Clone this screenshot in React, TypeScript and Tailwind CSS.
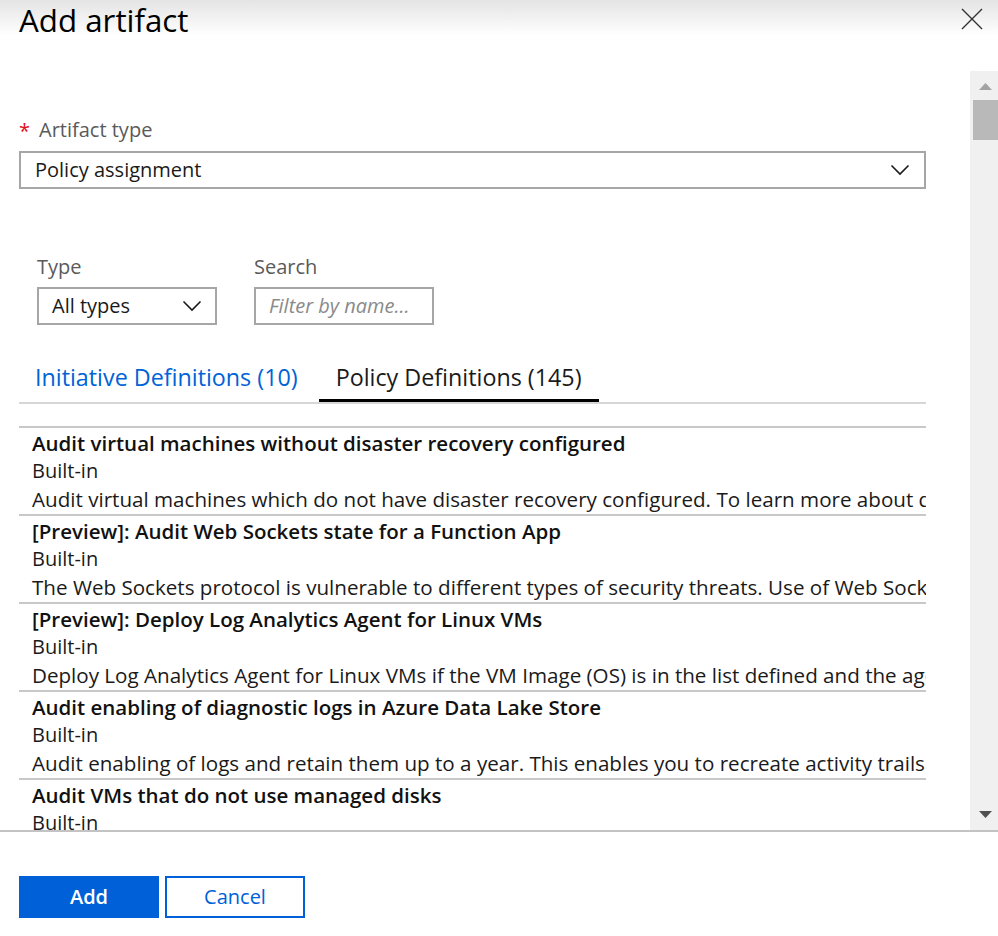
import React from "react";

const rows = [
  {
    title: "Audit virtual machines without disaster recovery configured",
    desc: "Audit virtual machines which do not have disaster recovery configured. To learn more about disaster recovery, visit the documentation.",
  },
  {
    title: "[Preview]: Audit Web Sockets state for a Function App",
    desc: "The Web Sockets protocol is vulnerable to different types of security threats. Use of Web Sockets within a Function app must be carefully analyzed.",
  },
  {
    title: "[Preview]: Deploy Log Analytics Agent for Linux VMs",
    desc: "Deploy Log Analytics Agent for Linux VMs if the VM Image (OS) is in the list defined and the agent is not installed.",
  },
  {
    title: "Audit enabling of diagnostic logs in Azure Data Lake Store",
    desc: "Audit enabling of logs and retain them up to a year. This enables you to recreate activity trails for investigation purposes.",
  },
  {
    title: "Audit VMs that do not use managed disks",
    desc: "This policy audits VMs that do not use managed disks.",
  },
];

function Chevron() {
  return (
    <svg width="20" height="12" viewBox="0 0 20 12" fill="none">
      <path d="M1.5 1.5 L10 10 L18.5 1.5" stroke="#1a1a1a" strokeWidth="1.6" />
    </svg>
  );
}

export default function App() {
  return (
    <div
      className="w-[998px] h-[936px] bg-white flex flex-col overflow-hidden text-[#1a1a1a]"
      style={{ fontFamily: '"Open Sans", "Noto Sans", sans-serif' }}
    >
      {/* header */}
      <div className="h-[71px] shrink-0 flex items-start justify-between bg-gradient-to-b from-[#e4e4e4] via-white to-white">
        <div className="pl-[19px] pt-[0px] text-[31.3px] leading-[40px] text-black">Add artifact</div>
        <div className="pr-[15px] pt-[8px]">
          <svg width="22" height="22" viewBox="0 0 22 22" fill="none">
            <path d="M1 1 L21 21 M21 1 L1 21" stroke="#333" strokeWidth="1.4" />
          </svg>
        </div>
      </div>

      {/* body */}
      <div className="h-[759px] shrink-0 flex">
        <div className="flex-1 overflow-hidden pl-[19px] pr-[44px]">
          {/* artifact type */}
          <div className="mt-[45px] flex items-center h-[28px] text-[20px] leading-[28px]">
            <span className="text-[#e00b1c] w-[20px] text-[20px] leading-[28px] pt-[2px]">*</span>
            <span className="text-[#5a5a5a]">Artifact type</span>
          </div>
          <div className="mt-[7px] h-[38px] border-2 border-[#a6a6a6] flex items-center justify-between pl-[14px] pr-[14px] text-[20px]">
            <span>Policy assignment</span>
            <Chevron />
          </div>

          {/* filters */}
          <div className="mt-[64px] flex gap-[37px] pl-[18px]">
            <div className="flex flex-col">
              <span className="h-[28px] leading-[28px] text-[20px] text-[#5a5a5a]">Type</span>
              <div className="mt-[6px] w-[180px] h-[38px] border-2 border-[#a6a6a6] flex items-center justify-between pl-[13px] pr-[13px] text-[20px]">
                <span>All types</span>
                <Chevron />
              </div>
            </div>
            <div className="flex flex-col">
              <span className="h-[28px] leading-[28px] text-[20px] text-[#5a5a5a]">Search</span>
              <div className="mt-[6px] w-[180px] h-[38px] border-2 border-[#a6a6a6] flex items-center pl-[13px] text-[20px] italic text-[#8a8a8a]">
                Filter by name...
              </div>
            </div>
          </div>

          {/* tabs */}
          <div className="mt-[37px] flex border-b-2 border-[#d6d6d6]">
            <div className="pl-[16px] pr-[21px] leading-[30px] pb-[10px] text-[23.3px] text-[#0063d6]">
              Initiative Definitions (10)
            </div>
            <div className="px-[17px] leading-[30px] pb-[7px] text-[23.3px] border-b-[3px] border-black">
              Policy Definitions (145)
            </div>
          </div>

          {/* list */}
          <div className="mt-[22px]">
            {rows.map((r) => (
              <div key={r.title} className="border-t-2 border-[#c8c8c8] pl-[13px] pb-[1px] pt-[1px] whitespace-nowrap overflow-hidden text-[20px] leading-[28px]">
                <div className="font-semibold text-[20.5px] text-[#111]">{r.title}</div>
                <div>Built-in</div>
                <div className="text-[20.6px]">{r.desc}</div>
              </div>
            ))}
          </div>
        </div>

        {/* scrollbar */}
        <div className="w-[28px] shrink-0 bg-[#f0f0f0] flex flex-col items-center pl-[2px]">
          <div className="h-[29px] flex items-center justify-center pt-[2px]">
            <svg width="13" height="7" viewBox="0 0 13 7">
              <path d="M0 7 L6.5 0 L13 7 Z" fill="#a3a3a3" />
            </svg>
          </div>
          <div className="w-[25px] h-[40px] bg-[#b9b9b9]" />
          <div className="flex-1" />
          <div className="h-[30px] flex items-start justify-center pt-[11px]">
            <svg width="13" height="7" viewBox="0 0 13 7">
              <path d="M0 0 L13 0 L6.5 7 Z" fill="#505050" />
            </svg>
          </div>
        </div>
      </div>

      {/* footer */}
      <div className="flex-1 border-t-2 border-[#c3c3c3] pl-[19px] pt-[44px] flex gap-[6px]">
        <button className="w-[140px] h-[42px] bg-[#0060d8] text-white text-[20px] font-semibold">Add</button>
        <button className="w-[140px] h-[42px] border-2 border-[#0060d8] text-[#0060d8] text-[20px]">Cancel</button>
      </div>
    </div>
  );
}
